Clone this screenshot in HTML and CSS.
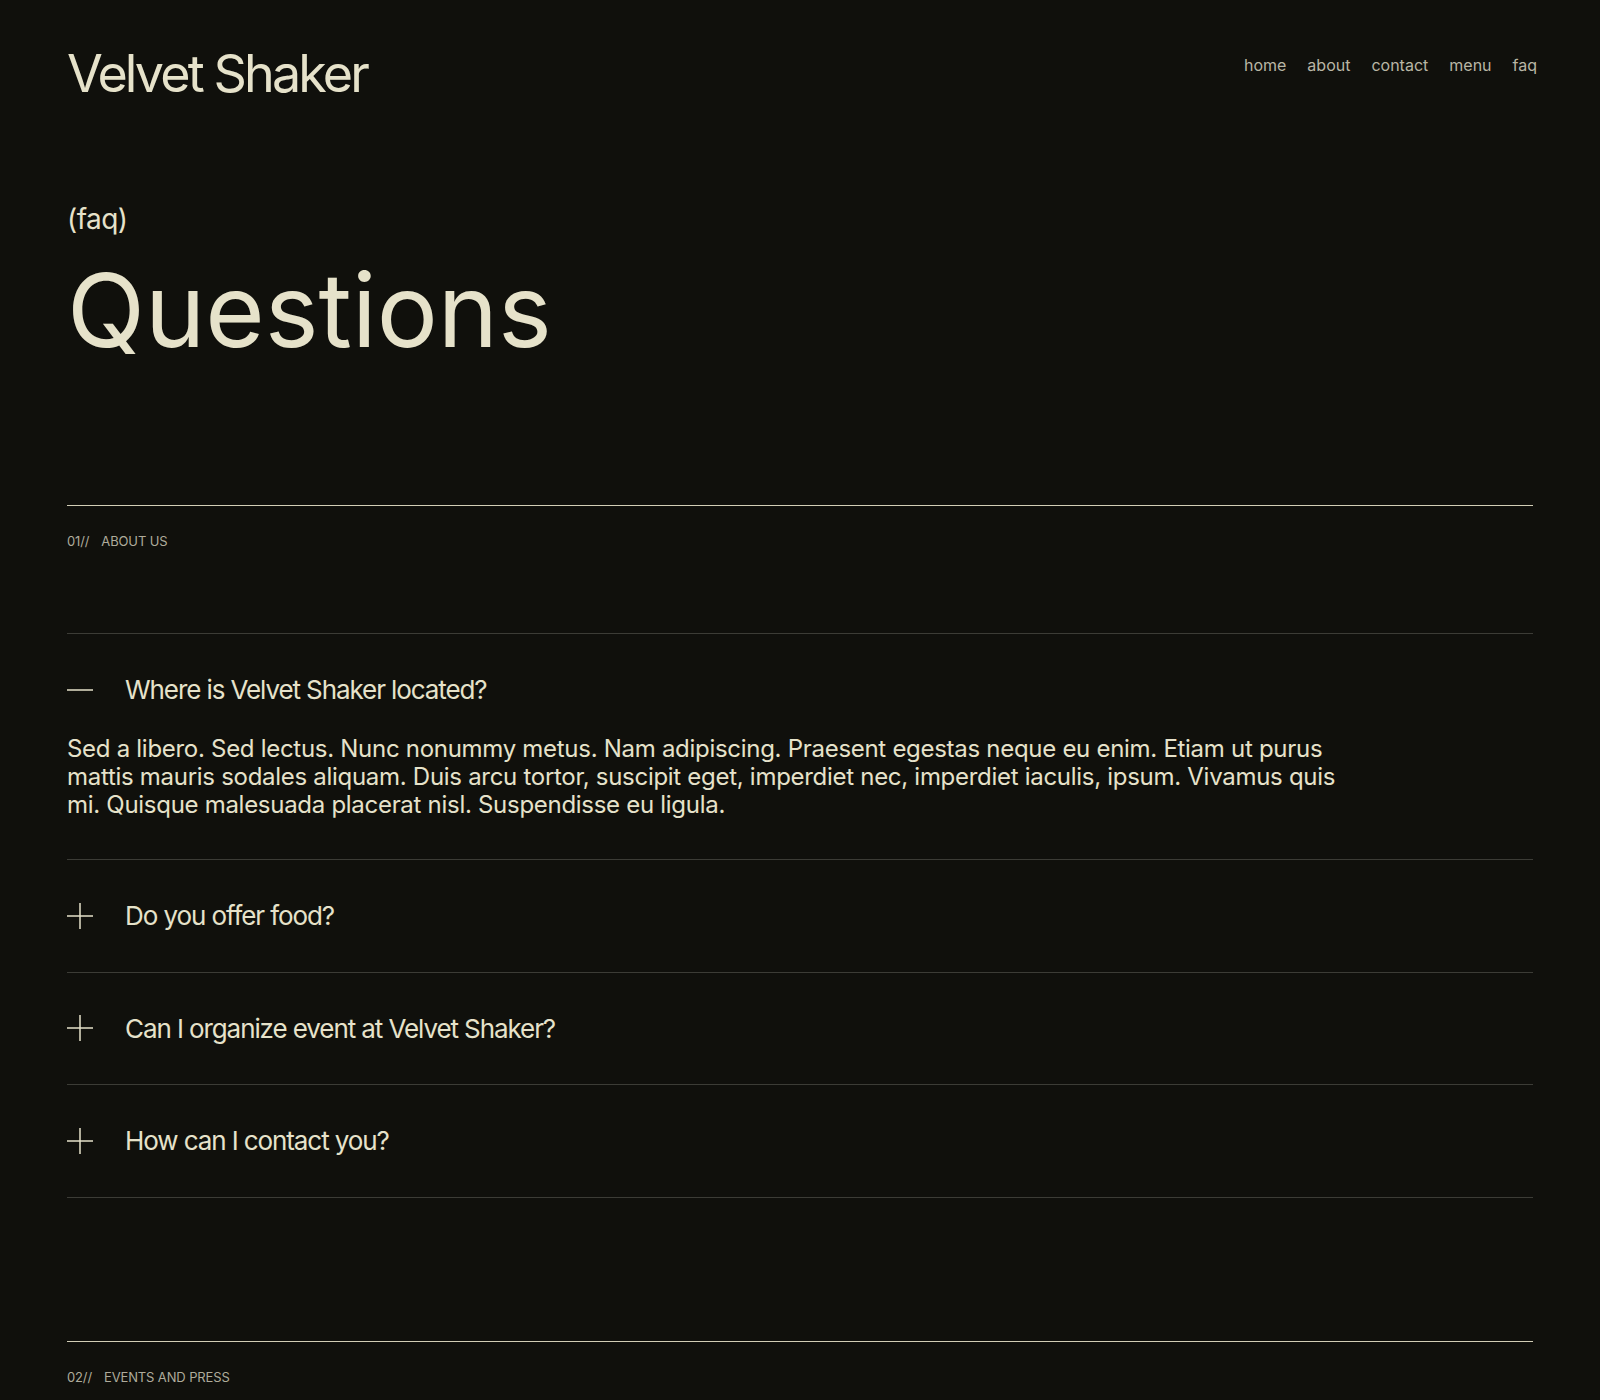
FILE: index.html
```html
<!DOCTYPE html>
<html lang="en">
<head>
  <meta charset="UTF-8">
  <meta name="viewport" content="width=device-width, initial-scale=1.0">
  <title>Velvet Shaker - FAQ</title>
  <link rel="stylesheet" href="styles.css">
</head>
<body>
<div class="page">
  <header class="site-header">
    <a class="logo" href="#">Velvet Shaker</a>
    <nav class="main-nav">
      <a href="#">home</a>
      <a href="#">about</a>
      <a href="#">contact</a>
      <a href="#">menu</a>
      <a href="#">faq</a>
    </nav>
  </header>

  <section class="hero">
    <p class="eyebrow">(faq)</p>
    <h1>Questions</h1>
  </section>

  <section class="faq-group">
    <div class="group-label"><span>01//</span><span>ABOUT US</span></div>
    <div class="faq-list">
      <div class="faq-item open">
        <button class="faq-question" type="button">
          <svg class="faq-icon" viewBox="0 0 26 26"><line x1="0" y1="13" x2="26" y2="13"/></svg>
          <span>Where is Velvet Shaker located?</span>
        </button>
        <p class="faq-answer">Sed a libero. Sed lectus. Nunc nonummy metus. Nam adipiscing. Praesent egestas neque eu enim. Etiam ut purus mattis mauris sodales aliquam. Duis arcu tortor, suscipit eget, imperdiet nec, imperdiet iaculis, ipsum. Vivamus quis mi. Quisque malesuada placerat nisl. Suspendisse eu ligula.</p>
      </div>
      <div class="faq-item">
        <button class="faq-question" type="button">
          <svg class="faq-icon" viewBox="0 0 26 26"><line x1="0" y1="13" x2="26" y2="13"/><line x1="13" y1="0" x2="13" y2="26"/></svg>
          <span>Do you offer food?</span>
        </button>
      </div>
      <div class="faq-item">
        <button class="faq-question" type="button">
          <svg class="faq-icon" viewBox="0 0 26 26"><line x1="0" y1="13" x2="26" y2="13"/><line x1="13" y1="0" x2="13" y2="26"/></svg>
          <span>Can I organize event at Velvet Shaker?</span>
        </button>
      </div>
      <div class="faq-item">
        <button class="faq-question" type="button">
          <svg class="faq-icon" viewBox="0 0 26 26"><line x1="0" y1="13" x2="26" y2="13"/><line x1="13" y1="0" x2="13" y2="26"/></svg>
          <span>How can I contact you?</span>
        </button>
      </div>
    </div>
  </section>

  <section class="faq-group">
    <div class="group-label"><span>02//</span><span>EVENTS AND PRESS</span></div>
  </section>
</div>
</body>
</html>
```

FILE: styles.css
```css
body {
  margin: 0;
  padding: 0;
  background-color: #10100c;
  color: #e6e2ca;
  font-family: Inter, "Noto Sans", sans-serif;
}

.page {
  padding: 0 67px;
}

a {
  color: inherit;
  text-decoration: none;
}

.site-header {
  display: flex;
  justify-content: space-between;
  align-items: flex-start;
  padding-top: 43px;
}

.logo {
  font-size: 52px;
  line-height: 62px;
  letter-spacing: -0.055em;
}

.main-nav {
  display: flex;
  gap: 21px;
  margin: 10px -4px 0 0;
  font-size: 16px;
  line-height: 24px;
}

.main-nav a {
  color: #b9b6a5;
}

.hero {
  padding-top: 97px;
}

.eyebrow {
  margin: 0;
  font-size: 28px;
  line-height: 34px;
  letter-spacing: -0.02em;
}

.hero h1 {
  margin: 23px 0 0;
  font-size: 102px;
  line-height: 102px;
  font-weight: 400;
}

.faq-group {
  margin-top: 144px;
  border-top: 1px solid #d2ceb6;
}

.faq-group + .faq-group {
  margin-top: 143px;
}

.group-label {
  display: flex;
  gap: 12px;
  padding-top: 25px;
  font-size: 13px;
  line-height: 20px;
  color: #aeab9b;
  letter-spacing: -0.01em;
}

.faq-list {
  margin-top: 82px;
  border-bottom: 1px solid #3c3c36;
}

.faq-item {
  border-top: 1px solid #3c3c36;
  padding: 40px 0;
}

.faq-question {
  display: flex;
  align-items: center;
  gap: 32px;
  width: 100%;
  padding: 0;
  border: none;
  background: none;
  color: inherit;
  font-family: inherit;
  font-size: 26px;
  line-height: 31.5px;
  letter-spacing: -0.042em;
  text-align: left;
  cursor: pointer;
}

.faq-icon {
  width: 26px;
  height: 26px;
  flex-shrink: 0;
  stroke: #e6e2ca;
  stroke-width: 1.5;
}

.faq-answer {
  max-width: 1285px;
  margin: 29.5px 0 0;
  font-size: 24px;
  line-height: 28px;
  letter-spacing: -0.012em;
}
```
